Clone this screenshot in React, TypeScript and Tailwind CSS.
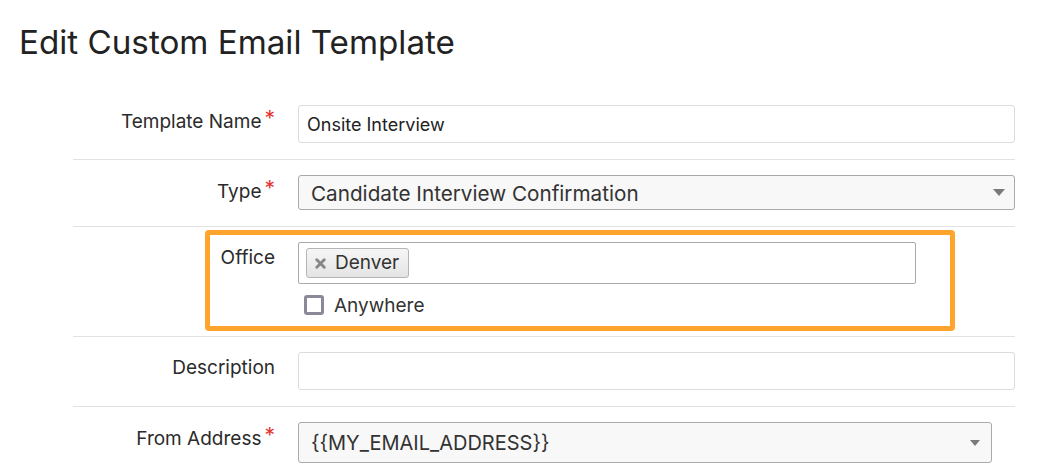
// Edit Custom Email Template form, with the Office field highlighted.

function Required() {
  return <span className="text-[#e3342f] ml-[3px] text-[21px] relative -top-[2px]">*</span>
}

function Arrow({ small }: { small?: boolean }) {
  return (
    <svg
      width={small ? 10 : 12}
      height={small ? 6 : 7}
      viewBox="0 0 12 7"
      className="shrink-0"
    >
      <path d="M0 0h12L6 7z" fill="#7a7a7a" />
    </svg>
  )
}

function Label({ text, required }: { text: string; required?: boolean }) {
  return (
    <div className="w-[202px] shrink-0 text-right text-[19px] leading-[24px] pt-[4px] text-[#2b2b2b]">
      {text}
      {required && <Required />}
    </div>
  )
}

export default function App() {
  return (
    <div className="w-[1064px] h-[476px] overflow-hidden bg-white font-['Inter',sans-serif] text-[#2b2b2b]">
      <h1 className="pl-[19px] pt-[26px] text-[33.2px] leading-none font-normal text-[#222]">
        Edit Custom Email Template
      </h1>

      <div className="ml-[73px] w-[942px] mt-[30px]">
        {/* Template Name */}
        <div className="flex gap-[23px] pt-[16px] pb-[16px] border-b border-[#e2e2e2]">
          <Label text="Template Name" required />
          <div className="flex-1 h-[38px] border border-[#dcdcdc] rounded-[3px] flex items-center pl-[8px] text-[18px] text-[#222]">
            Onsite Interview
          </div>
        </div>

        {/* Type */}
        <div className="flex gap-[23px] pt-[15px] pb-[16px] border-b border-[#e2e2e2]">
          <Label text="Type" required />
          <div className="flex-1 h-[35px] border border-[#aaaaaa] rounded-[3px] bg-[#f8f8f8] flex items-center justify-between pl-[12px] pr-[9px] text-[20.7px] text-[#333]">
            <span className="pt-[2px]">Candidate Interview Confirmation</span>
            <Arrow />
          </div>
        </div>

        {/* Office (highlighted) */}
        <div className="pl-[132px] pr-[60px] pt-[3px] pb-[5px] border-b border-[#e2e2e2]">
          <div className="flex gap-[23px] border-[5px] border-[#ffa52e] rounded-[4px] pt-[7px] pb-[11px]">
            <div className="w-[65px] shrink-0 text-right text-[19px] leading-[24px] pt-[4px] text-[#2b2b2b]">
              Office
            </div>
            <div className="flex flex-col">
              <div className="w-[618px] h-[42px] border border-[#aaaaaa] rounded-[2px] flex items-center pl-[7px]">
                <div className="h-[30px] flex items-center gap-[9px] pl-[8px] pr-[9px] border border-[#b5b5b5] rounded-[3px] bg-gradient-to-b from-[#f6f6f6] to-[#e4e4e4]">
                  <svg width="11" height="11" viewBox="0 0 11 11" className="shrink-0">
                    <path d="M1.8 1.8l7.4 7.4M9.2 1.8l-7.4 7.4" stroke="#888" strokeWidth="3" strokeLinecap="round" />
                  </svg>
                  <span className="text-[19px] text-[#333]">Denver</span>
                </div>
              </div>
              <label className="flex items-center gap-[10px] mt-[11px] pl-[6px]">
                <span className="w-[20px] h-[20px] border-[3px] border-[#8b8898] rounded-[3px] bg-white" />
                <span className="text-[19px] leading-[20px] relative top-[1px] text-[#333]">Anywhere</span>
              </label>
            </div>
          </div>
        </div>

        {/* Description */}
        <div className="flex gap-[23px] pt-[15px] pb-[16px] border-b border-[#e2e2e2]">
          <Label text="Description" />
          <div className="flex-1 h-[38px] border border-[#dcdcdc] rounded-[3px]" />
        </div>

        {/* From Address */}
        <div className="flex gap-[23px] pt-[15px]">
          <Label text="From Address" required />
          <div className="w-[694px] h-[41px] border border-[#aaaaaa] rounded-[3px] bg-[#f8f8f8] flex items-center justify-between pl-[12px] pr-[11px] text-[20px] text-[#333]">
            <span>{'{{MY_EMAIL_ADDRESS}}'}</span>
            <Arrow small />
          </div>
        </div>
      </div>
    </div>
  )
}
